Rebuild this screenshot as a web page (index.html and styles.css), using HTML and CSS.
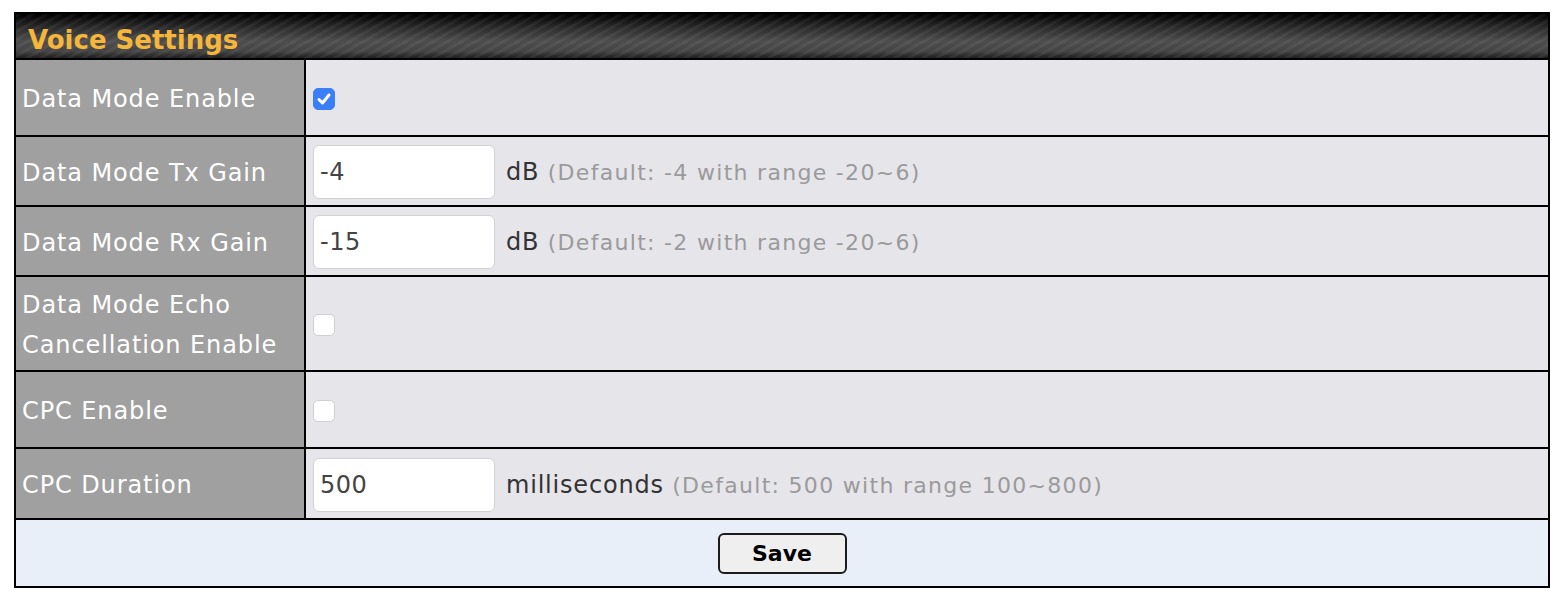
FILE: index.html
```html
<!DOCTYPE html>
<html>

    <head>
        <title>Voice Settings</title>
        <meta name="viewport" content="width=device-width, initial-scale=1.0">
        <link rel="stylesheet" href="styles.css">
    </head>

    <body>
        <div class="panel">
            <div class="panel-head">Voice Settings</div>

            <div class="row row-tall">
                <div class="label">Data Mode Enable</div>
                <div class="value">
                    <span class="check on">
                        <svg width="22" height="22" viewBox="0 0 22 22"><path d="M6 11.5 L9.5 15 L16 7" fill="none" stroke="#fff" stroke-width="3" stroke-linecap="round" stroke-linejoin="round"/></svg>
                    </span>
                </div>
            </div>

            <div class="row">
                <div class="label">Data Mode Tx Gain</div>
                <div class="value">
                    <input type="text" class="field" value="-4">
                    <span class="unit">dB <span class="hint">(Default: -4 with range -20~6)</span></span>
                </div>
            </div>

            <div class="row">
                <div class="label">Data Mode Rx Gain</div>
                <div class="value">
                    <input type="text" class="field" value="-15">
                    <span class="unit">dB <span class="hint">(Default: -2 with range -20~6)</span></span>
                </div>
            </div>

            <div class="row row-double">
                <div class="label">Data Mode Echo<br>Cancellation Enable</div>
                <div class="value">
                    <span class="check"></span>
                </div>
            </div>

            <div class="row row-tall">
                <div class="label">CPC Enable</div>
                <div class="value">
                    <span class="check"></span>
                </div>
            </div>

            <div class="row row-last">
                <div class="label">CPC Duration</div>
                <div class="value">
                    <input type="text" class="field" value="500">
                    <span class="unit">milliseconds <span class="hint">(Default: 500 with range 100~800)</span></span>
                </div>
            </div>

            <div class="actions">
                <button type="button" class="save">Save</button>
            </div>
        </div>
    </body>

</html>
```

FILE: styles.css
```css
body {
    margin: 0;
    padding: 12px 0 0 14px;
    background: #fff;
    font-family: "DejaVu Sans", Verdana, sans-serif;
}

.panel {
    width: 1536px;
    box-sizing: border-box;
    border: 2px solid #000;
}

.panel-head {
    height: 44px;
    box-sizing: border-box;
    padding: 8px 0 0 12px;
    line-height: 36px;
    font-size: 26px;
    font-weight: bold;
    color: #f5b63a;
    background:
        repeating-linear-gradient(150deg, rgba(255, 255, 255, 0.05) 0 3px, rgba(0, 0, 0, 0) 3px 7px),
        linear-gradient(to bottom, #000 0%, #2a2a2a 30%, #4e4e4e 62%, #444 85%, #1e1e1e 100%);
}

.row {
    display: flex;
    height: 68px;
    border-top: 2px solid #000;
}

.row-tall {
    height: 75px;
}

.row-double {
    height: 93px;
}

.row-last {
    height: 69px;
}

.label {
    width: 290px;
    flex-shrink: 0;
    display: flex;
    align-items: center;
    padding: 3px 0 0 6px;
    box-sizing: border-box;
    background: #a0a0a0;
    border-right: 2px solid #000;
    color: #fff;
    font-size: 24px;
    line-height: 40px;
    letter-spacing: 0.9px;
}

.value {
    flex: 1;
    display: flex;
    align-items: center;
    padding: 2px 0 0 7px;
    background: #e6e5ea;
}

.field {
    width: 182px;
    height: 54px;
    box-sizing: border-box;
    padding: 0 6px;
    border: 1px solid #d2d2d2;
    border-radius: 6px;
    background: #fff;
    font-family: "DejaVu Sans", Verdana, sans-serif;
    font-size: 24px;
    letter-spacing: 0.5px;
    color: #444;
}

.unit {
    margin-left: 11px;
    font-size: 24px;
    letter-spacing: 0.8px;
    color: #333;
}

.hint {
    font-size: 22px;
    letter-spacing: 1.3px;
    color: #9a9a9a;
}

.check {
    width: 22px;
    height: 22px;
    box-sizing: border-box;
    border: 1px solid #cfcfcf;
    border-radius: 5px;
    background: #fff;
}

.check.on {
    border-color: #3a7ff6;
    background: #3a7ff6;
}

.check svg {
    display: block;
    margin: -1px;
}

.actions {
    height: 66px;
    border-top: 2px solid #000;
    background: #e9eff9;
    display: flex;
    justify-content: center;
    align-items: center;
}

.save {
    width: 129px;
    height: 41px;
    border: 2px solid #1c1c1c;
    border-radius: 6px;
    background: #efefef;
    font-family: "DejaVu Sans", Verdana, sans-serif;
    font-size: 22px;
    font-weight: bold;
    color: #000;
}
```
